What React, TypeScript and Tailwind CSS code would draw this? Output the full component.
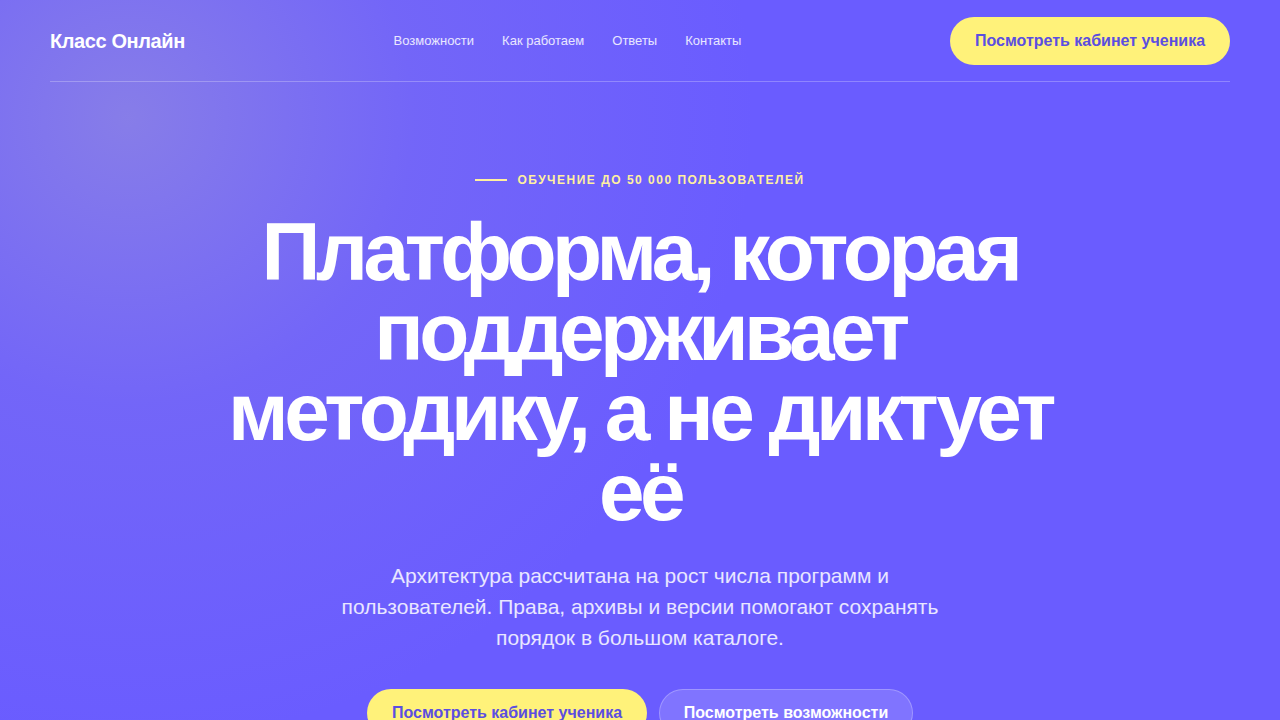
export default function App() {
  const links = ["Возможности", "Как работаем", "Ответы", "Контакты"];

  return (
    <div className="relative min-h-screen overflow-hidden bg-[#6a5cff] font-['Liberation_Sans',Arial,sans-serif] text-white">
      <div className="pointer-events-none absolute inset-0 bg-[radial-gradient(circle_at_10%_16%,rgba(170,165,205,0.45)_0%,rgba(150,140,220,0.2)_22%,rgba(106,92,255,0)_48%)]" />

      <div className="relative mx-auto max-w-[1180px]">
        <header className="flex items-center justify-between border-b border-white/25 pt-[17px] pb-4">
          <div className="text-[20px] font-bold tracking-[-0.02em]">Класс Онлайн</div>
          <nav className="flex items-center gap-7 text-[13px] text-white/85">
            {links.map((l) => (
              <a key={l} href="#">
                {l}
              </a>
            ))}
          </nav>
          <button
            type="button"
            className="h-12 w-[280px] rounded-full bg-[#fff27a] text-[16px] font-bold text-[#5b4ee0]"
          >
            Посмотреть кабинет ученика
          </button>
        </header>

        <section className="flex flex-col items-center pt-[89px] text-center">
          <div className="flex items-center gap-[10px] text-[12px] font-bold uppercase tracking-[0.125em] text-[#fff0a0]">
            <span className="h-[2px] w-8 bg-[#fff0a0]" />
            Обучение до 50 000 пользователей
          </div>

          <h1 className="mt-[23px] max-w-[860px] text-[82px] font-bold leading-[80px] tracking-[-0.055em]">
            Платформа, которая поддерживает методику, а не диктует её
          </h1>

          <p className="mt-7 max-w-[610px] text-[21px] leading-[31px] text-white/85">
            Архитектура рассчитана на рост числа программ и пользователей. Права, архивы и версии помогают
            сохранять порядок в большом каталоге.
          </p>

          <div className="mt-9 flex gap-3">
            <button
              type="button"
              className="h-12 w-[280px] rounded-full bg-[#fff27a] text-[16px] font-bold text-[#5b4ee0]"
            >
              Посмотреть кабинет ученика
            </button>
            <button
              type="button"
              className="h-12 w-[254px] rounded-full border border-white/25 bg-white/15 text-[16px] font-bold text-white"
            >
              Посмотреть возможности
            </button>
          </div>
        </section>
      </div>
    </div>
  );
}
